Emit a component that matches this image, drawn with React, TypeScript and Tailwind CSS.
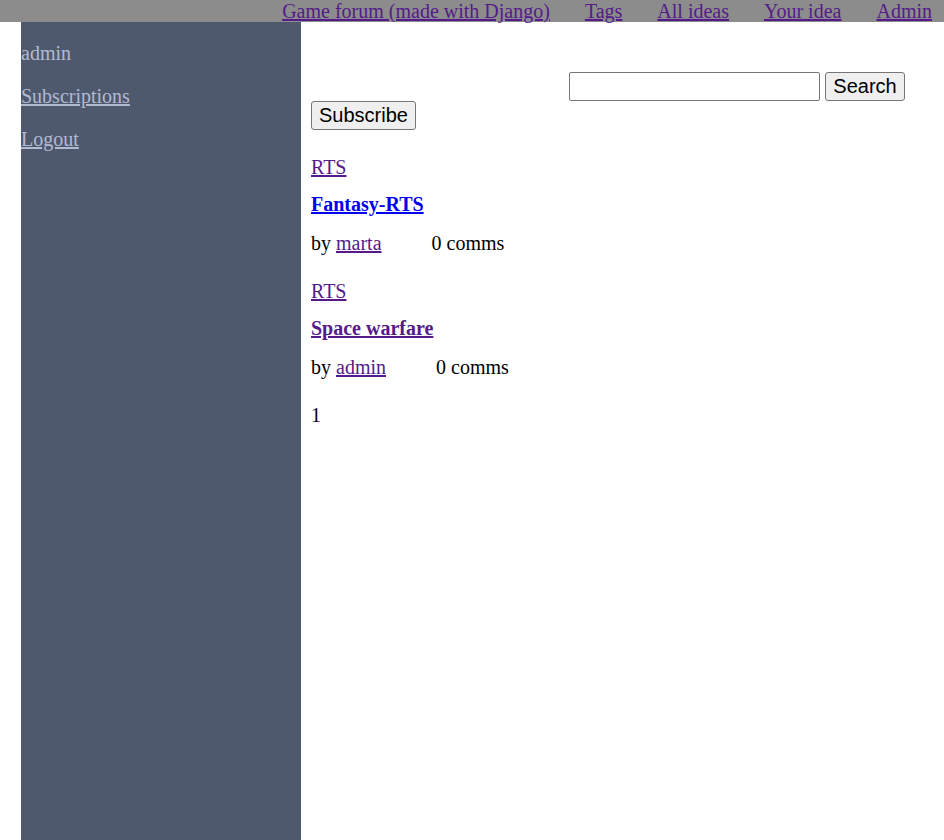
export default function App() {
  const navLinks = ['Game forum (made with Django)', 'Tags', 'All ideas', 'Your idea', 'Admin'];

  const ideas = [
    { tag: 'RTS', title: 'Fantasy-RTS', author: 'marta', comms: 0, visited: false },
    { tag: 'RTS', title: 'Space warfare', author: 'admin', comms: 0, visited: true },
  ];

  return (
    <div className="min-h-[840px] bg-white font-['Liberation_Serif',serif] text-[20px] leading-[23px] text-black">
      {/* Top nav */}
      <div className="flex h-[22px] justify-end gap-[35px] bg-[#8c8c8c] pr-[12px] leading-[22px]">
        {navLinks.map((l) => (
          <a key={l} href="#" className="text-[#551a8b] underline">
            {l}
          </a>
        ))}
      </div>

      <div className="flex">
        <div className="w-[21px] shrink-0" />

        {/* Sidebar */}
        <div className="flex min-h-[818px] w-[280px] shrink-0 flex-col gap-[20px] bg-[#4f596d] pt-[20px] text-[#b1bad3]">
          <p>admin</p>
          <p>
            <a href="#" className="underline">Subscriptions</a>
          </p>
          <p>
            <a href="#" className="underline">Logout</a>
          </p>
        </div>

        {/* Main */}
        <div className="flex-1 pl-[10px]">
          <div className="mt-[50px] flex justify-end gap-[5px] pr-[39px]">
            <input
              type="text"
              className="h-[29px] w-[251px] rounded-[2px] border border-[#767676] bg-white px-[2px] font-['Liberation_Sans',sans-serif] text-[16px] outline-none"
            />
            <button className="h-[29px] w-[80px] rounded-[3px] border border-[#767676] bg-[#efefef] pb-[2px] font-['Liberation_Sans',sans-serif] text-[20px] leading-[22px]">
              Search
            </button>
          </div>
          <button className="h-[29px] w-[105px] rounded-[3px] border border-[#767676] bg-[#efefef] pb-[2px] font-['Liberation_Sans',sans-serif] text-[20px] leading-[22px]">
            Subscribe
          </button>

          <div className="mt-[26px] flex flex-col">
            {ideas.map((idea, i) => (
              <div key={i} className={i > 0 ? 'mt-[25px]' : ''}>
                <a href="#" className="block w-fit text-[#551a8b] underline">
                  {idea.tag}
                </a>
                <a
                  href="#"
                  className={`mt-[14px] block w-fit font-bold underline ${
                    idea.visited ? 'text-[#551a8b]' : 'text-[#0000ee]'
                  }`}
                >
                  {idea.title}
                </a>
                <p className="mt-[16px]">
                  by{' '}
                  <a href="#" className="text-[#551a8b] underline">
                    {idea.author}
                  </a>
                  <span className="ml-[50px]">{idea.comms} comms</span>
                </p>
              </div>
            ))}
            <p className="mt-[25px]">1</p>
          </div>
        </div>
      </div>
    </div>
  );
}
